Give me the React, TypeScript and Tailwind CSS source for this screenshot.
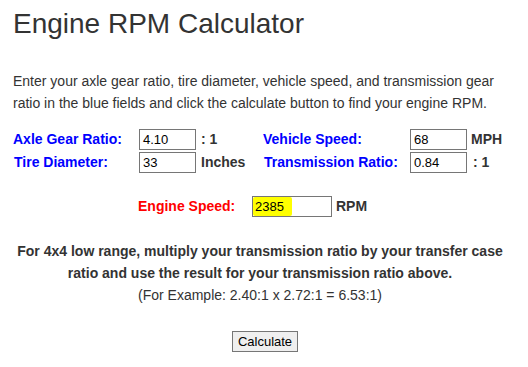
const Field = ({ value, width = "w-[57px]" }: { value: string; width?: string }) => (
  <div className={`${width} h-[21px] border border-[#767676] bg-white px-[3px] text-[13px] leading-[19px] text-black font-normal`}>
    {value}
  </div>
);

export default function App() {
  return (
    <div className="w-[528px] h-[367px] bg-white text-[#333] font-['Liberation_Sans',Arial,sans-serif] overflow-hidden">
      <h1 className="pl-[13px] pt-[8px] text-[28px] leading-[32px] font-normal">Engine RPM Calculator</h1>

      <p className="pl-[13px] pr-[30px] mt-[30px] text-[14px] leading-[22px]">
        Enter your axle gear ratio, tire diameter, vehicle speed, and transmission gear ratio in the blue fields and
        click the calculate button to find your engine RPM.
      </p>

      {/* input rows */}
      <div className="mt-[15px] pl-[13px] flex flex-col gap-[2px] text-[14px] font-bold">
        <div className="flex items-center">
          <span className="w-[126px] text-[#0000ff]">Axle Gear Ratio:</span>
          <Field value="4.10" />
          <span className="w-[67px] pl-[5px]">: 1</span>
          <span className="w-[147px] text-[#0000ff]">Vehicle Speed:</span>
          <Field value="68" />
          <span className="pl-[4px]">MPH</span>
        </div>
        <div className="flex items-center">
          <span className="w-[126px] pl-[1px] text-[#0000ff]">Tire Diameter:</span>
          <Field value="33" />
          <span className="w-[67px] pl-[5px]">Inches</span>
          <span className="w-[147px] pl-[1px] text-[#0000ff]">Transmission Ratio:</span>
          <Field value="0.84" />
          <span className="pl-[6px]">: 1</span>
        </div>
      </div>

      <div className="mt-[23px] pl-[138px] flex items-center text-[14px] font-bold">
        <span className="w-[114px] text-[#ff0000]">Engine Speed:</span>
        <div className="w-[80px] h-[21px] border border-[#767676] bg-white text-[13px] leading-[19px] text-black font-normal">
          <span className="inline-block bg-[#ffff00] pl-[2px] pr-[8px] h-[19px] rounded-[2px]">2385</span>
        </div>
        <span className="pl-[4px]">RPM</span>
      </div>

      <div className="mt-[23px] ml-[13px] w-[494px] text-center text-[14px] leading-[22px]">
        <p className="font-bold">
          For 4x4 low range, multiply your transmission ratio by your transfer case ratio and use the result for your
          transmission ratio above.
        </p>
        <p>(For Example: 2.40:1 x 2.72:1 = 6.53:1)</p>
      </div>

      <div className="mt-[25px] flex justify-center pl-[2px]">
        <button className="h-[21px] px-[5px] border border-[#767676] bg-[#efefef] text-[13px] leading-[19px] text-black">
          Calculate
        </button>
      </div>
    </div>
  );
}
